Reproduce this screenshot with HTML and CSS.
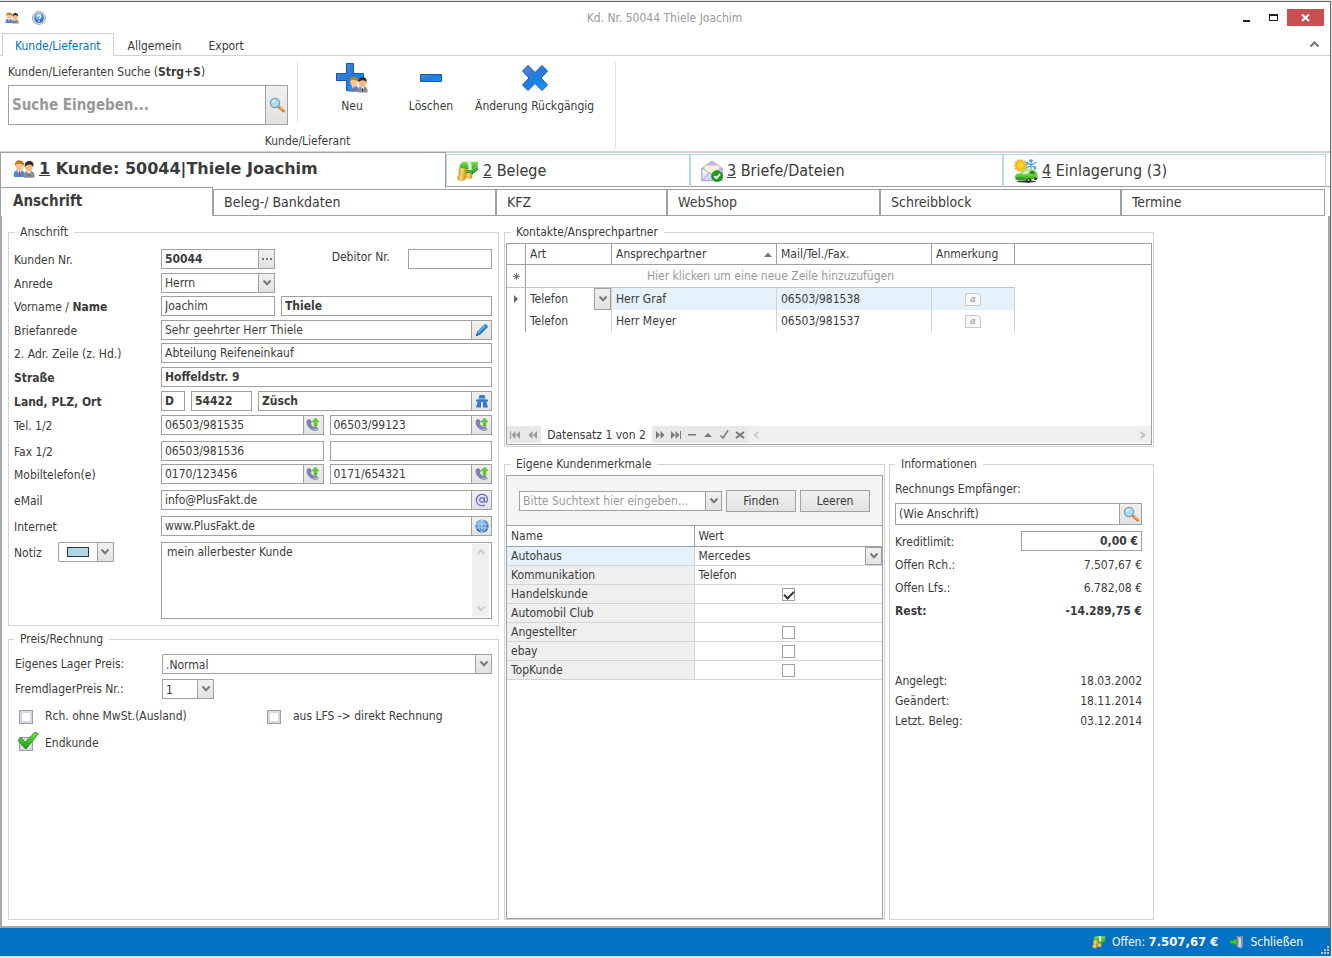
FILE: index.html
```html
<!DOCTYPE html>
<html lang="de">
<head>
    <meta charset="UTF-8">
    <meta name="viewport" content="width=device-width, initial-scale=1.0">
    <title>Kd. Nr. 50044 Thiele Joachim</title>
    <link rel="stylesheet" href="styles.css">
</head>
<body>
    <!-- Shared icons -->
    <svg class="sprites" aria-hidden="true">
        <defs>
            <linearGradient id="g-blue" x1="0" y1="0" x2="1" y2="1">
                <stop offset="0" stop-color="#5a86cf"/><stop offset="0.5" stop-color="#1f7be0"/><stop offset="1" stop-color="#0a9cff"/>
            </linearGradient>
            <linearGradient id="g-green" x1="0" y1="0" x2="0" y2="1">
                <stop offset="0" stop-color="#7be34d"/><stop offset="1" stop-color="#1c9a12"/>
            </linearGradient>
            <linearGradient id="g-car" x1="0" y1="0" x2="0" y2="1">
                <stop offset="0" stop-color="#a6ee6c"/><stop offset="0.6" stop-color="#58cc33"/><stop offset="1" stop-color="#2f9a20"/>
            </linearGradient>
            <linearGradient id="g-gold" x1="0" y1="0" x2="1" y2="0">
                <stop offset="0" stop-color="#d09a1c"/><stop offset="0.4" stop-color="#ffe680"/><stop offset="1" stop-color="#cf9014"/>
            </linearGradient>
            <radialGradient id="g-ball" cx="0.4" cy="0.3" r="0.8">
                <stop offset="0" stop-color="#9ccbf5"/><stop offset="0.6" stop-color="#3c7fcb"/><stop offset="1" stop-color="#1c4f9c"/>
            </radialGradient>
            <radialGradient id="g-sun">
                <stop offset="0" stop-color="#fff04a"/><stop offset="1" stop-color="#ffb400"/>
            </radialGradient>
            <linearGradient id="g-mail" x1="0" y1="0" x2="1" y2="1">
                <stop offset="0" stop-color="#ffffff"/><stop offset="1" stop-color="#b9b9f0"/>
            </linearGradient>
        </defs>
        <symbol id="users" viewBox="0 0 22 18">
            <path d="M1 17c-1-5 1-7 5-7s6 2 6 7z" fill="#3f8be0"/>
            <path d="M4 10l2.500 6 2-6z" fill="#e8f2ff"/>
            <path d="M6 11l1 0 .6 4-1 1.500-1-1.500z" fill="#e0352b"/>
            <ellipse cx="6.500" cy="6" rx="4" ry="4.800" fill="#ffc58c"/>
            <path d="M2 6c-.5-4 2-6 5-5.600C10.500.6 11.500 3 10.800 6 10 4 8 4 6 3.800 4 4 3 4 2 6z" fill="#b9801c"/>
            <path d="M11 17.800c-1-5 1-7 5-7s6 2 5.500 7z" fill="#8e8e92"/>
            <path d="M14 11l2 5.500 2-5.500z" fill="#f2f2f2"/>
            <path d="M16 12l.8 3-.8 2-.8-2z" fill="#333"/>
            <ellipse cx="16" cy="7" rx="3.800" ry="4.600" fill="#ffb77c"/>
            <path d="M11.800 7c-.6-4 1.500-6 4.500-6s5 2 4 6c-.8-2-2-2.400-4-2.600-2 .2-3.600.6-4.500 2.600z" fill="#2b2b2b"/>
        </symbol>
        <symbol id="help" viewBox="0 0 16 16">
            <circle cx="8" cy="8" r="7.300" fill="#d8dde4" stroke="#8b96a6"/>
            <circle cx="8" cy="8" r="5.500" fill="url(#g-ball)"/>
            <path d="M6 6.300c.2-2.300 4-2.300 4 .1 0 1.400-2 1.600-2 3M8 10.800v1.400" fill="none" stroke="#fff" stroke-width="1.500"/>
        </symbol>
        <symbol id="lens" viewBox="0 0 16 16">
            <path d="M9.500 9.500l5 4.500" stroke="#e07a20" stroke-width="3" stroke-linecap="round"/>
            <path d="M10.500 9.800l4 3.600" stroke="#ffd9a0" stroke-width="1"/>
            <circle cx="6" cy="6" r="4.600" fill="#a8dcfa" stroke="#7f9fc0" stroke-width="1.300"/>
            <path d="M3.500 5.500c.4-1.400 1.500-2.200 3-2.200" stroke="#fff" stroke-width="1.300" fill="none"/>
        </symbol>
        <symbol id="down" viewBox="0 0 10 8">
            <path d="M1.500 1.500L5 5.200l3.500-3.700" fill="none" stroke="currentColor" stroke-width="2"/>
        </symbol>
        <symbol id="dots" viewBox="0 0 12 4">
            <path d="M1 1h2v2H1zM5 1h2v2H5zM9 1h2v2H9z" fill="#777"/>
        </symbol>
        <symbol id="pencil" viewBox="0 0 14 14">
            <path d="M1 13l1-4L9.500 1.500c1-1 4 1 3 3L5 12z" fill="#1f86dc"/>
            <path d="M3 10l7-7" stroke="#9fd0f8" stroke-width="1"/>
            <path d="M1 13l.6-2.300 1.700 1.700z" fill="#444"/>
        </symbol>
        <symbol id="road" viewBox="0 0 14 14">
            <path d="M4.500 1h5L13 13.500H1z" fill="#3b78cc"/>
            <path d="M7 8v6" stroke="#f0f0f0" stroke-width="1.800"/>
            <path d="M1 6.500h12" stroke="#3b78cc" stroke-width="2"/>
            <path d="M2 4.800h10" stroke="#dce8f8" stroke-width="0.700"/>
        </symbol>
        <symbol id="phone" viewBox="0 0 14 14">
            <path d="M1.500 2c-2 4 2 10.500 8.500 10.500l2-1.500-2-2.500-2 .8C6 8.500 5 7 4.600 5.500L5.500 4 4 1.500z" fill="#7f83bd" stroke="#5d6196" stroke-width="0.500"/>
            <path d="M7 11.500h5.500" stroke="#aaa" stroke-width="2"/>
            <path d="M9.500 0l3.500 3.800h-2V8H8V3.800H6z" fill="#62d52a" stroke="#3da414" stroke-width="0.500"/>
        </symbol>
        <symbol id="at" viewBox="0 0 14 14">
            <circle cx="7" cy="7" r="6.500" fill="#e4e4f6"/>
            <circle cx="7" cy="7" r="2.300" fill="none" stroke="#6a6ab5" stroke-width="1.300"/>
            <path d="M9.500 4.500v3.700c.3 1.600 3 1.300 3-1.500C12.300 3.500 10 1.300 7 1.300S1.300 3.800 1.300 7s2.500 5.700 5.700 5.700c1.200 0 2-.2 3-.8" fill="none" stroke="#6a6ab5" stroke-width="1.200"/>
        </symbol>
        <symbol id="globe" viewBox="0 0 14 14">
            <circle cx="7" cy="7" r="6.600" fill="url(#g-ball)"/>
            <path d="M1 5h12M1 9h12M7 .5v13M7 .5c-4.500 4-4.500 9 0 13M7 .5c4.500 4 4.500 9 0 13" fill="none" stroke="#d4e8fa" stroke-width="0.700"/>
            <path d="M2.500 3.500l3-1.500 1.500 2-2 2.500-3-.5zM8 8l3-1 1 2-2.500 3z" fill="#8fc4ee"/>
        </symbol>
        <symbol id="money" viewBox="0 0 24 22">
            <path d="M3 5.500l19.500 0 .5 4-7.500 6L4 12z" fill="#178c15"/>
            <path d="M6 1h17l-.5 5.500-7 5.500L3 9V4.500z" fill="url(#g-green)"/>
            <path d="M4 8.500l12 1.500 6.500-4M4 10.500l12 2 6.500-4.500" fill="none" stroke="#b7f29a" stroke-width="0.600"/>
            <path d="M11 1h4l1 3 0 6h-3.500l-.5-5z" fill="#dfeed6"/>
            <g fill="url(#g-gold)">
                <path d="M2 10h8v4.500H2zM.800 17h8.400v2.500H.8zM9.500 15h7v2.500h-7z"/>
            </g>
            <g fill="url(#g-gold)" stroke="#b98216" stroke-width="0.300">
                <ellipse cx="6" cy="14" rx="4" ry="2"/><ellipse cx="6" cy="12" rx="4" ry="2"/><ellipse cx="6" cy="9.800" rx="4" ry="2"/>
                <ellipse cx="5" cy="19.700" rx="4.200" ry="2"/><ellipse cx="5" cy="17.200" rx="4.200" ry="2"/>
                <ellipse cx="13" cy="17.500" rx="3.700" ry="1.900"/><ellipse cx="13" cy="15.200" rx="3.700" ry="1.900"/>
            </g>
        </symbol>
        <symbol id="mail" viewBox="0 0 24 24">
            <path d="M1 9L12 1l11 8v13.500H1z" fill="#b9b9ea" stroke="#9d9dd6" stroke-width="0.800"/>
            <path d="M4 6h16v10H4z" fill="#fff1d6" stroke="#e6cfa0" stroke-width="0.500"/>
            <path d="M1 9l11 7 11-7v13.500H1z" fill="url(#g-mail)" stroke="#9595d2" stroke-width="0.800"/>
            <path d="M1 22.500l8.500-8.500" stroke="#9595d2"/>
            <circle cx="17.500" cy="17.500" r="6" fill="#1f9c1c" stroke="#0d7a10" stroke-width="0.600"/>
            <path d="M14.500 17.500l2.300 2.400 4-4.600" fill="none" stroke="#fff" stroke-width="2"/>
        </symbol>
        <symbol id="car" viewBox="0 0 24 24">
            <circle cx="6.500" cy="6.500" r="5.200" fill="none" stroke="#ff9b1a" stroke-width="2.200" stroke-dasharray="2 1"/>
            <circle cx="6.500" cy="6.500" r="4.800" fill="url(#g-sun)"/>
            <path d="M17 0v12M11.500 3l11 6.500M11.500 9.500l11-6.500M15 1l2 2 2-2M12 5.500l2-.8-.4-2.200M22.500 7.500l-2.200.8.4 2.200" fill="none" stroke="#3a9df0" stroke-width="1.200"/>
            <ellipse cx="12.500" cy="22.500" rx="10" ry="1.200" fill="#444"/>
            <circle cx="14.500" cy="21" r="2.600" fill="#222"/>
            <circle cx="21.500" cy="19" r="2" fill="#222"/>
            <path d="M1 18c.3-2.500 2-3.500 5-4l4-3.300c3-1.300 9-1.300 11 .3l2.500 3.500v4.500l-2 .5c-.5-1.500-2-1-2.500.8l-2 .7c-.5-2.500-4-2.500-4.500.5H5L1.500 20.500z" fill="url(#g-car)"/>
            <path d="M7.500 15l3.500-3.200c2-.7 3-.7 4.500-.5L14 15z" fill="#d6f5c4"/>
            <path d="M15.500 15l1.300-3.300 3 .3 1.500 2.700z" fill="#3b7d2f"/>
            <path d="M2 18.500h8v1H2z" fill="#2b7a1e"/>
            <circle cx="14.500" cy="21" r="1" fill="#ccc"/>
        </symbol>
        <symbol id="door" viewBox="0 0 15 15">
            <path d="M7 1h7v12H7z" fill="#8a93a8"/>
            <path d="M8.500 1.500l4 1.500v11.500l-4-1.500z" fill="#cdd4e2" stroke="#5d6680" stroke-width="0.600"/>
            <path d="M0 6h4V3.500L8.500 7.500 4 11.500V9H0z" fill="#43cf2a" stroke="#1e8a12" stroke-width="0.600"/>
        </symbol>
    </svg>

    <div class="window">
        <header class="titlebar">
            <div class="quick">
                <svg class="ico-14" aria-hidden="true"><use href="#users"/></svg>
                <button class="plain" aria-label="Hilfe"><svg class="ico-14"><use href="#help"/></svg></button>
            </div>
            <h1>Kd. Nr. 50044 Thiele Joachim</h1>
            <div class="controls">
                <button aria-label="Minimieren"><svg width="7" height="10"><path d="M0 7h7v2H0z" fill="#222"/></svg></button>
                <button aria-label="Maximieren"><svg width="9" height="8"><path d="M0 0h9v7H0zM1 2v4h7V2z" fill="#222" fill-rule="evenodd"/></svg></button>
                <button class="close" aria-label="Fenster schließen"><svg width="9" height="8"><path d="M1 .500l7 6.500M8 .500L1 7" stroke="#fff" stroke-width="2"/></svg></button>
            </div>
        </header>

        <nav class="ribbon-tabs">
            <a href="#" class="active">Kunde/Lieferant</a>
            <a href="#">Allgemein</a>
            <a href="#">Export</a>
            <button class="collapse" aria-label="Menüband einklappen"><svg width="11" height="8"><path d="M1.500 6.500l4-4 4 4" fill="none" stroke="#777" stroke-width="2"/></svg></button>
        </nav>

        <div class="ribbon">
            <div class="ribbon-group">
                <div class="ribbon-items">
                    <div class="search">
                        <label for="search">Kunden/Lieferanten Suche (<b>Strg+S</b>)</label>
                        <div class="field">
                            <input type="text" id="search" placeholder="Suche Eingeben...">
                            <button class="wide" aria-label="Suchen"><svg class="ico-16"><use href="#lens"/></svg></button>
                        </div>
                    </div>
                    <button class="big">
                        <svg class="ico-32" viewBox="0 0 32 32"><path d="M10.500 1.500h7v10h10v7h-10v10h-7v-10H.5v-7h10z" fill="url(#g-blue)" stroke="#1656b4"/><use href="#users" x="12" y="14" width="20" height="17"/></svg>
                        Neu
                    </button>
                    <button class="big">
                        <svg class="ico-32" viewBox="0 0 32 32"><path d="M5.500 12.500h21v7h-21z" fill="url(#g-blue)" stroke="#1656b4"/></svg>
                        Löschen
                    </button>
                    <button class="big">
                        <svg class="ico-32" viewBox="0 0 32 32"><path d="M9 3.500l7 7 7-7 5.500 5.500-6.500 7 6.500 7-5.500 5.500-7-7-7 7L3.500 23l6.500-7-6.500-7z" fill="url(#g-blue)" stroke="#1656b4"/></svg>
                        Änderung Rückgängig
                    </button>
                </div>
                <div class="ribbon-caption">Kunde/Lieferant</div>
            </div>
        </div>

        <nav class="main-tabs">
            <a href="#" class="active"><svg class="ico-22" aria-hidden="true"><use href="#users"/></svg><span><u>1</u> Kunde: 50044|Thiele Joachim</span></a>
            <a href="#"><svg class="ico-22" aria-hidden="true"><use href="#money"/></svg><span><u>2</u> Belege</span></a>
            <a href="#"><svg class="ico-22" aria-hidden="true"><use href="#mail"/></svg><span><u>3</u> Briefe/Dateien</span></a>
            <a href="#"><svg class="ico-24" aria-hidden="true"><use href="#car"/></svg><span><u>4</u> Einlagerung (3)</span></a>
        </nav>

        <nav class="sub-tabs">
            <a href="#" class="active">Anschrift</a>
            <a href="#">Beleg-/ Bankdaten</a>
            <a href="#">KFZ</a>
            <a href="#">WebShop</a>
            <a href="#">Schreibblock</a>
            <a href="#">Termine</a>
        </nav>

        <main class="content">
            <div class="left">
                <fieldset>
                    <legend>Anschrift</legend>
                    <div class="address">
                        <label for="kdnr">Kunden Nr.</label>
                        <div class="line">
                            <div class="field w-name bold"><input type="text" id="kdnr" value="50044"><button class="narrow" aria-label="Kunden Nr. auswählen"><svg width="12" height="4"><use href="#dots"/></svg></button></div>
                            <label for="debitor" class="debitor">Debitor Nr.</label>
                            <div class="field w-debitor"><input type="text" id="debitor"></div>
                        </div>

                        <label for="anrede">Anrede</label>
                        <div class="line">
                            <div class="field w-name"><select id="anrede"><option>Herrn</option></select><span class="arrow"><svg width="10" height="8"><use href="#down"/></svg></span></div>
                        </div>

                        <label for="vorname">Vorname / <b>Name</b></label>
                        <div class="line">
                            <div class="field w-name"><input type="text" id="vorname" value="Joachim"></div>
                            <div class="field bold grow"><input type="text" value="Thiele" aria-label="Name"></div>
                        </div>

                        <label for="brief">Briefanrede</label>
                        <div class="field"><input type="text" id="brief" value="Sehr geehrter Herr Thiele"><button aria-label="Bearbeiten"><svg class="ico-14"><use href="#pencil"/></svg></button></div>

                        <label for="zeile2">2. Adr. Zeile (z. Hd.)</label>
                        <div class="field"><input type="text" id="zeile2" value="Abteilung Reifeneinkauf"></div>

                        <label for="strasse" class="bold">Straße</label>
                        <div class="field bold"><input type="text" id="strasse" value="Hoffeldstr. 9"></div>

                        <label for="land" class="bold">Land, PLZ, Ort</label>
                        <div class="line bold">
                            <div class="field w-land"><input type="text" id="land" value="D"></div>
                            <div class="field w-plz"><input type="text" value="54422" aria-label="PLZ"></div>
                            <div class="field grow"><input type="text" value="Züsch" aria-label="Ort"><button aria-label="Route"><svg class="ico-14"><use href="#road"/></svg></button></div>
                        </div>

                        <label for="tel">Tel. 1/2</label>
                        <div class="line">
                            <div class="field grow"><input type="tel" id="tel" value="06503/981535"><button aria-label="Anrufen"><svg class="ico-14"><use href="#phone"/></svg></button></div>
                            <div class="field grow"><input type="tel" value="06503/99123" aria-label="Tel. 2"><button aria-label="Anrufen"><svg class="ico-14"><use href="#phone"/></svg></button></div>
                        </div>

                        <label for="fax">Fax 1/2</label>
                        <div class="line">
                            <div class="field grow"><input type="tel" id="fax" value="06503/981536"></div>
                            <div class="field grow"><input type="tel" aria-label="Fax 2"></div>
                        </div>

                        <label for="mobil">Mobiltelefon(e)</label>
                        <div class="line">
                            <div class="field grow"><input type="tel" id="mobil" value="0170/123456"><button aria-label="Anrufen"><svg class="ico-14"><use href="#phone"/></svg></button></div>
                            <div class="field grow"><input type="tel" value="0171/654321" aria-label="Mobiltelefon 2"><button aria-label="Anrufen"><svg class="ico-14"><use href="#phone"/></svg></button></div>
                        </div>

                        <label for="email">eMail</label>
                        <div class="field"><input type="text" id="email" value="info@PlusFakt.de"><button aria-label="eMail schreiben"><svg class="ico-14"><use href="#at"/></svg></button></div>

                        <label for="web">Internet</label>
                        <div class="field"><input type="text" id="web" value="www.PlusFakt.de"><button aria-label="Webseite öffnen"><svg class="ico-14"><use href="#globe"/></svg></button></div>

                        <div class="note-label">
                            <label for="notiz">Notiz</label>
                            <button class="color" aria-label="Farbe"><span class="swatch"></span><span class="arrow"><svg width="10" height="8"><use href="#down"/></svg></span></button>
                        </div>
                        <div class="field memo">
                            <textarea id="notiz">mein allerbester Kunde</textarea>
                            <div class="memo-scroll">
                                <svg width="10" height="8"><path d="M1.500 6L5 2.300 8.500 6" fill="none" stroke="currentColor" stroke-width="2"/></svg>
                                <svg width="10" height="8"><use href="#down"/></svg>
                            </div>
                        </div>
                    </div>
                </fieldset>

                <fieldset class="fill">
                    <legend>Preis/Rechnung</legend>
                    <div class="price">
                        <label for="lager">Eigenes Lager Preis:</label>
                        <div class="field"><select id="lager"><option>.Normal</option></select><span class="arrow"><svg width="10" height="8"><use href="#down"/></svg></span></div>
                        <label for="fremd">FremdlagerPreis Nr.:</label>
                        <div class="field w-nr"><select id="fremd"><option>1</option></select><span class="arrow"><svg width="10" height="8"><use href="#down"/></svg></span></div>
                    </div>
                    <div class="checks">
                        <label><input type="checkbox"> Rch. ohne MwSt.(Ausland)</label>
                        <label><input type="checkbox"> aus LFS -&gt; direkt Rechnung</label>
                        <label><input type="checkbox" checked><svg class="tick" viewBox="0 0 22 19" aria-hidden="true"><path d="M1 9.500l3-2.500 4.500 4L18 1.200l3.200 1.600L9.500 17.500H8z" fill="url(#g-green)" stroke="#23931a"/></svg> Endkunde</label>
                    </div>
                </fieldset>
            </div>

            <div class="right">
                <fieldset class="contacts snug">
                    <legend>Kontakte/Ansprechpartner</legend>
                    <div class="grid-box">
                        <table class="contact-table">
                            <colgroup>
                                <col class="c-mark"><col class="c-art"><col class="c-person"><col class="c-tel"><col class="c-note"><col>
                            </colgroup>
                            <thead>
                                <tr>
                                    <th></th>
                                    <th>Art</th>
                                    <th class="sorted">Ansprechpartner <svg width="8" height="5"><path d="M0 5l4-4.500L8 5z" fill="#777"/></svg></th>
                                    <th>Mail/Tel./Fax.</th>
                                    <th>Anmerkung</th>
                                    <th></th>
                                </tr>
                            </thead>
                            <tbody>
                                <tr class="new-row">
                                    <td class="mark"><svg width="7" height="7"><path d="M3.500 0v7M0 3.500h7M1 1l5 5M6 1L1 6" stroke="#777"/></svg></td>
                                    <td colspan="4">Hier klicken um eine neue Zeile hinzuzufügen</td>
                                    <td></td>
                                </tr>
                                <tr class="current">
                                    <td class="mark"><svg width="4" height="8"><path d="M0 0l4 4-4 4z" fill="#666"/></svg></td>
                                    <td class="editing"><div class="cell-combo"><select aria-label="Art"><option>Telefon</option></select><span class="arrow"><svg width="10" height="8"><use href="#down"/></svg></span></div></td>
                                    <td>Herr Graf</td>
                                    <td>06503/981538</td>
                                    <td class="center"><span class="note">a</span></td>
                                    <td></td>
                                </tr>
                                <tr>
                                    <td class="mark"></td>
                                    <td>Telefon</td>
                                    <td>Herr Meyer</td>
                                    <td>06503/981537</td>
                                    <td class="center"><span class="note">a</span></td>
                                    <td></td>
                                </tr>
                            </tbody>
                        </table>
                        <div class="navigator">
                            <button class="dim" aria-label="Erster"><svg width="11" height="8"><path d="M0 0h1v8H0zM5.500 0v8L1.500 4zM10 0v8L6 4z" fill="currentColor"/></svg></button>
                            <button class="dim" aria-label="Zurück"><svg width="9" height="8"><path d="M4.500 0v8L.5 4zM9 0v8L5 4z" fill="currentColor"/></svg></button>
                            <span class="record">Datensatz 1 von 2</span>
                            <button aria-label="Weiter"><svg width="9" height="8"><path d="M0 0v8l4-4zM4.500 0v8l4-4z" fill="currentColor"/></svg></button>
                            <button aria-label="Letzter"><svg width="10" height="8"><path d="M0 0v8l4-4zM4.500 0v8l4-4zM9 0h1v8H9z" fill="currentColor"/></svg></button>
                            <button aria-label="Löschen"><svg width="8" height="8"><path d="M0 3h8v1.500H0z" fill="currentColor"/></svg></button>
                            <button aria-label="Bearbeiten"><svg width="8" height="8"><path d="M0 6l4-4 4 4z" fill="currentColor"/></svg></button>
                            <button aria-label="Übernehmen"><svg width="9" height="9"><path d="M.5 5.500L3 8l5-7.500" fill="none" stroke="currentColor" stroke-width="1.500"/></svg></button>
                            <button aria-label="Verwerfen"><svg width="10" height="8"><path d="M1 1l8 6M9 1L1 7" stroke="currentColor" stroke-width="2"/></svg></button>
                            <div class="hscroll">
                                <svg width="6" height="8"><path d="M5.500 1L1.500 4l4 3" fill="none" stroke="currentColor" stroke-width="1.500"/></svg>
                                <svg width="6" height="8"><path d="M.5 1l4 3-4 3" fill="none" stroke="currentColor" stroke-width="2"/></svg>
                            </div>
                        </div>
                    </div>
                </fieldset>

                <div class="lower">
                    <fieldset class="snug">
                        <legend>Eigene Kundenmerkmale</legend>
                        <div class="grid-box">
                            <div class="find-bar">
                                <div class="field grow"><input type="text" placeholder="Bitte Suchtext hier eingeben..." aria-label="Suchtext"><button class="narrow" aria-label="Verlauf"><svg width="10" height="8"><use href="#down"/></svg></button></div>
                                <button class="btn">Finden</button>
                                <button class="btn">Leeren</button>
                            </div>
                            <table class="props">
                                <thead>
                                    <tr><th>Name</th><th>Wert</th></tr>
                                </thead>
                                <tbody>
                                    <tr class="current"><th scope="row">Autohaus</th><td class="editing"><div class="cell-combo"><select aria-label="Autohaus"><option>Mercedes</option></select><span class="arrow"><svg width="10" height="8"><use href="#down"/></svg></span></div></td></tr>
                                    <tr><th scope="row">Kommunikation</th><td>Telefon</td></tr>
                                    <tr><th scope="row">Handelskunde</th><td class="center"><input type="checkbox" aria-label="Handelskunde" checked></td></tr>
                                    <tr><th scope="row">Automobil Club</th><td></td></tr>
                                    <tr><th scope="row">Angestellter</th><td class="center"><input type="checkbox" aria-label="Angestellter"></td></tr>
                                    <tr><th scope="row">ebay</th><td class="center"><input type="checkbox" aria-label="ebay"></td></tr>
                                    <tr><th scope="row">TopKunde</th><td class="center"><input type="checkbox" aria-label="TopKunde"></td></tr>
                                </tbody>
                            </table>
                        </div>
                    </fieldset>

                    <fieldset class="info">
                        <legend>Informationen</legend>
                        <label for="empf">Rechnungs Empfänger:</label>
                        <div class="field receiver"><input type="text" id="empf" value="(Wie Anschrift)"><button class="wide" aria-label="Suchen"><svg class="ico-16"><use href="#lens"/></svg></button></div>
                        <div class="pair limit"><label for="limit">Kreditlimit:</label><div class="field bold"><input type="text" id="limit" value="0,00 €"></div></div>
                        <div class="pair"><span>Offen Rch.:</span><span>7.507,67 €</span></div>
                        <div class="pair"><span>Offen Lfs.:</span><span>6.782,08 €</span></div>
                        <div class="pair bold"><span>Rest:</span><span>-14.289,75 €</span></div>
                        <div class="dates">
                            <div class="pair"><span>Angelegt:</span><span>18.03.2002</span></div>
                            <div class="pair"><span>Geändert:</span><span>18.11.2014</span></div>
                            <div class="pair"><span>Letzt. Beleg:</span><span>03.12.2014</span></div>
                        </div>
                    </fieldset>
                </div>
            </div>
        </main>

        <footer class="statusbar">
            <div class="status-item"><svg class="ico-14" aria-hidden="true"><use href="#money"/></svg><span>Offen: <b>7.507,67 €</b></span></div>
            <button class="status-item"><svg class="ico-14" aria-hidden="true"><use href="#door"/></svg><span>Schließen</span></button>
            <svg class="grip" width="8" height="8" aria-hidden="true"><path d="M6 0h2v2H6zM3 3h2v2H3zM6 3h2v2H6zM0 6h2v2H0zM3 6h2v2H3zM6 6h2v2H6z" fill="#b8c4cc"/></svg>
        </footer>
    </div>
</body>
</html>
```
FILE: styles.css
```css
* {
    margin: 0;
    padding: 0;
    box-sizing: border-box;
}

body {
    min-height: 100vh;
    display: flex;
    padding: 1px 1px 2px 0;
    background-color: #e4e4e4;
    color: #3b3b3b;
    font-family: "DejaVu Sans Condensed", "DejaVu Sans", sans-serif;
    font-size: 12px;
    line-height: 16px;
}

button, input, select, textarea {
    font: inherit;
    color: inherit;
    border: none;
    background: none;
    border-radius: 0;
    outline: none;
}

select, input[type="checkbox"] {
    appearance: none;
}

a {
    color: inherit;
    text-decoration: none;
}

svg {
    display: block;
    flex-shrink: 0;
}

.bold, b {
    font-weight: bold;
}

.sprites {
    position: absolute;
    width: 0;
    height: 0;
}

.ico-14 { width: 14px; height: 14px; }
.ico-16 { width: 16px; height: 16px; }
.ico-22 { width: 22px; height: 22px; }
.ico-24 { width: 24px; height: 24px; }
.ico-32 { width: 32px; height: 32px; }

.window {
    flex: 1;
    min-width: 0;
    display: flex;
    flex-direction: column;
    background-color: #fff;
    border-top: 1px solid #666;
    border-right: 1px solid #666;
}

/* Title bar */
.titlebar {
    display: grid;
    grid-template-columns: 1fr auto 1fr;
    align-items: center;
    height: 31px;
    padding: 0 6px 0 5px;
}

.titlebar h1 {
    font-size: 12px;
    font-weight: normal;
    color: #999;
}

.quick {
    display: flex;
    gap: 13px;
}

.controls {
    display: flex;
    justify-content: flex-end;
}

.controls button {
    width: 27px;
    height: 17px;
    display: flex;
    align-items: center;
    justify-content: center;
}

.controls .close {
    width: 37px;
    background-color: #c75050;
}

/* Ribbon */
.ribbon-tabs {
    display: flex;
    gap: 1px;
    height: 23px;
    padding-left: 2px;
    border-bottom: 1px solid #d0d0d0;
}

.ribbon-tabs a {
    height: 23px;
    padding: 4px 12px 0;
    border: 1px solid transparent;
    border-bottom: none;
}

.ribbon-tabs a.active {
    color: #0072c6;
    background-color: #fff;
    border-color: #d0d0d0;
}

.collapse {
    margin-left: auto;
    padding-right: 10px;
}

.ribbon {
    display: flex;
    height: 97px;
    padding: 6px 0 3px;
    border-bottom: 2px solid #d3d3d3;
}

.ribbon-group {
    width: 616px;
    display: flex;
    flex-direction: column;
    border-right: 1px solid #e0e0e0;
}

.ribbon-items {
    flex: 1;
    display: flex;
    align-items: flex-start;
    gap: 9px;
    padding-left: 8px;
}

.search {
    width: 290px;
    height: 61px;
    padding: 2px 9px 0 0;
    margin-right: 10px;
    border-right: 1px solid #e0e0e0;
}

.search .field {
    height: 40px;
    margin-top: 5px;
}

.search input {
    font-size: 15px;
    font-weight: bold;
}

.big {
    min-width: 70px;
    display: flex;
    flex-direction: column;
    align-items: center;
    gap: 4px;
}

.ribbon-caption {
    height: 13px;
    line-height: 13px;
    text-align: center;
}

/* Fields */
.field {
    display: flex;
    height: 20px;
    min-width: 0;
    border: 1px solid #a0a0a0;
    background-color: #fff;
}

.field input, .field select {
    flex: 1;
    min-width: 0;
    width: 0;
    padding: 0 3px;
}

.field input::placeholder {
    color: #999;
    opacity: 1;
}

.field button, .arrow {
    width: 20px;
    display: flex;
    align-items: center;
    justify-content: center;
    flex-shrink: 0;
    color: #777;
    background: linear-gradient(#f0f0f0, #e2e2e2);
    border-left: 1px solid #a0a0a0;
}

.field .narrow, .arrow {
    width: 16px;
}

.field .wide {
    width: 22px;
}

/* Main tabs */
.main-tabs {
    display: grid;
    grid-template-columns: 446fr 244fr 313fr 323fr;
    align-items: end;
    height: 35px;
    padding-right: 4px;
    margin-top: -1px;
    border-bottom: 1px solid #a0a0a0;
    font-size: 16px;
}

.main-tabs a {
    display: flex;
    align-items: center;
    gap: 4px;
    height: 33px;
    padding: 0 10px 1px;
    border: 1px solid #b3d9e6;
    border-width: 1px 1px 0;
    white-space: nowrap;
}

.main-tabs a.active {
    height: 36px;
    padding: 0 12px 3px;
    margin-bottom: -1px;
    background-color: #fff;
    border-color: #a0a0a0;
    font-family: "DejaVu Sans", sans-serif;
    font-weight: bold;
}

.sub-tabs {
    display: grid;
    grid-template-columns: 213fr 283fr 171fr 213fr 241fr 204fr;
    align-items: end;
    height: 29px;
    padding-right: 5px;
    font-size: 14px;
}

.sub-tabs a {
    height: 27px;
    line-height: 25px;
    padding: 0 10px;
    border: 1px solid #a0a0a0;
}

.sub-tabs a.active {
    height: 29px;
    line-height: 27px;
    padding-left: 12px;
    border-bottom: none;
    font-size: 15px;
    font-weight: bold;
}

/* Content */
.content {
    flex: 1;
    display: grid;
    grid-template-columns: 491fr 650fr 168fr;
    column-gap: 5px;
    padding: 8px 1px 6px 6px;
    border: 2px solid #a8a8a8;
    border-top: none;
}

.left, .right {
    display: flex;
    flex-direction: column;
    min-width: 0;
}

.left {
    gap: 5px;
}

.right {
    gap: 9px;
}

fieldset {
    min-width: 0;
    border: 1px solid #d3d3d3;
    padding: 9px 6px 6px 5px;
}

fieldset.fill {
    flex: 1;
}

fieldset.snug {
    padding: 3px 1px 0 1px;
}

legend {
    padding: 0 6px;
    height: 16px;
}

.snug legend {
    margin-left: 4px;
}

.address {
    display: grid;
    grid-template-columns: 147px 1fr;
    grid-template-rows: 24px 23px 24px 23px 24px 24px 24px 26px 23px 26px 26px 26px 77px;
    align-items: start;
}

.address label {
    line-height: 22px;
}

.line {
    display: flex;
    gap: 6px;
}

.address .debitor {
    margin: -3px 12px 0 auto;
}

.grow {
    flex: 1;
}

.w-name { width: 114px; }
.w-debitor { width: 84px; }
.w-land { width: 24px; }
.w-plz { width: 61px; }
.w-nr { width: 52px; }

.note-label {
    display: flex;
    gap: 16px;
    align-items: flex-start;
}

.color {
    width: 56px;
    height: 20px;
    display: flex;
    justify-content: space-between;
    align-items: center;
    border: 1px solid #a0a0a0;
}

.color .arrow {
    height: 18px;
}

.swatch {
    width: 22px;
    height: 10px;
    margin-left: 8px;
    background-color: #add8e6;
    border: 1px solid #333;
}

.memo {
    height: 77px;
}

.memo textarea {
    flex: 1;
    min-width: 0;
    padding: 1px 5px;
    resize: none;
    overflow: hidden;
}

.memo-scroll {
    width: 17px;
    margin: 1px 2px;
    padding: 4px 0;
    display: flex;
    flex-direction: column;
    align-items: center;
    justify-content: space-between;
    background-color: #efefef;
    color: #ccc;
}

.price {
    display: grid;
    grid-template-columns: 147px 1fr;
    row-gap: 5px;
    padding-left: 1px;
    margin-top: -2px;
    line-height: 20px;
}

.checks {
    display: grid;
    grid-template-columns: 248px 1fr;
    padding: 4px 5px;
    line-height: 27px;
}

.checks label {
    display: flex;
    align-items: center;
    gap: 12px;
}

.checks input {
    width: 14px;
    height: 14px;
    border: 1px solid #9a9ea8;
    background-color: #fff;
    box-shadow: inset 0 0 0 2px #d6d8e0;
}

/* Big green tick drawn over its box */
.tick {
    width: 22px;
    height: 19px;
    margin: -6px -6px 0 -28px;
}

/* Data grids */
.grid-box {
    height: 100%;
    display: flex;
    flex-direction: column;
    border: 1px solid #a0a0a0;
}

.contacts {
    height: 223px;
}

.contacts .grid-box {
    height: 202px;
}

table {
    width: 100%;
    table-layout: fixed;
    border-collapse: separate;
    border-spacing: 0;
}

th, td {
    height: 22px;
    padding: 0 4px;
    font-weight: normal;
    text-align: left;
    white-space: nowrap;
    border-right: 1px solid #d3d3d3;
}

th:last-child, td:last-child {
    border-right: none;
}

thead th {
    height: 21px;
    border-right-color: #a0a0a0;
    border-bottom: 1px solid #a0a0a0;
}

td.center {
    text-align: center;
}

.note {
    display: block;
    width: 16px;
    height: 13px;
    margin: 0 auto;
    border: 1px solid #c8c8c8;
    border-top-right-radius: 4px;
    background-color: #f8f8f8;
    color: #aaa;
    font: italic bold 9px "DejaVu Serif", serif;
    line-height: 10px;
}

.c-mark { width: 19px; }
.c-art { width: 86px; }
.c-person { width: 165px; }
.c-tel { width: 155px; }
.c-note { width: 83px; }

.sorted svg {
    float: right;
    margin-top: 6px;
}

.mark {
    border-right-color: #a0a0a0;
}

.mark svg {
    margin: 0 auto;
}

.new-row td {
    height: 23px;
    color: #999;
    text-align: center;
    border-right: none;
    border-bottom: 1px solid #c4c4c4;
}

.new-row td:last-child {
    border-bottom: none;
}

.new-row td.mark {
    border-right: 1px solid #a0a0a0;
}

.contact-table .current td {
    background-color: #e5f1fb;
}

.contact-table .current .mark, .contact-table .current .editing, .contact-table .current td:last-child {
    background-color: #fff;
}

td.editing {
    padding: 0;
}

.cell-combo {
    display: flex;
    height: 22px;
}

.cell-combo select {
    flex: 1;
    min-width: 0;
    padding: 0 4px;
}

.cell-combo .arrow {
    width: 17px;
    border: 1px solid #a0a0a0;
}

.navigator {
    height: 17px;
    margin-top: auto;
    margin-bottom: 1px;
    display: flex;
}

.navigator button {
    width: 16px;
    display: flex;
    align-items: center;
    justify-content: center;
    background-color: #e8e8e8;
    color: #777;
}

.navigator .dim {
    width: 17px;
    color: #999;
}

.record {
    width: 111px;
    line-height: 18px;
    text-align: center;
    white-space: nowrap;
}

.hscroll {
    flex: 1;
    display: flex;
    align-items: center;
    justify-content: space-between;
    padding: 0 5px;
    background-color: #efefef;
    color: #c0c0c0;
}

.lower {
    flex: 1;
    display: grid;
    grid-template-columns: 381fr 265fr;
    gap: 4px;
}

.find-bar {
    display: flex;
    align-items: center;
    gap: 4px;
    height: 50px;
    padding: 0 12px;
    background-color: #f5f5f5;
    border-bottom: 1px solid #a0a0a0;
}

.btn {
    width: 70px;
    height: 22px;
    border: 1px solid #a0a0a0;
    background: linear-gradient(#f0f0f0, #e2e2e2);
}

.props th, .props td {
    height: 19px;
    line-height: 16px;
    border-bottom: 1px solid #d3d3d3;
}

.props thead th {
    height: 21px;
    border-bottom-color: #a0a0a0;
}

.props tbody th {
    background-color: #efefef;
}

.props .current th {
    background-color: #e5f1fb;
}

.props .cell-combo {
    height: 18px;
}

.props input {
    display: block;
    width: 13px;
    height: 13px;
    margin: 0 auto;
    border: 1px solid #a0a0a0;
    background-color: #fff;
}

.props input:checked::before {
    content: "";
    display: block;
    width: 8px;
    height: 4px;
    margin: 2px 1px;
    border-left: 2px solid #333;
    border-bottom: 2px solid #333;
    transform: rotate(-45deg);
}

/* Informationen */
.info {
    padding: 9px 11px 6px 5px;
}

.info > label {
    display: block;
    line-height: 16px;
}

.receiver {
    height: 22px;
    margin: 6px 0;
}

.pair {
    display: flex;
    justify-content: space-between;
    line-height: 23px;
}

.limit .field {
    width: 121px;
}

.limit input {
    text-align: right;
}

.dates {
    padding-top: 48px;
}

.dates .pair {
    line-height: 20px;
}

/* Status bar */
.statusbar {
    display: flex;
    align-items: center;
    justify-content: flex-end;
    gap: 12px;
    height: 28px;
    color: #fff;
    background-color: #0072c6;
}

.statusbar b {
    font-size: 13px;
}

.status-item {
    display: flex;
    align-items: center;
    gap: 6px;
}

.grip {
    align-self: flex-end;
    margin: 0 1px 2px 6px;
}
```
